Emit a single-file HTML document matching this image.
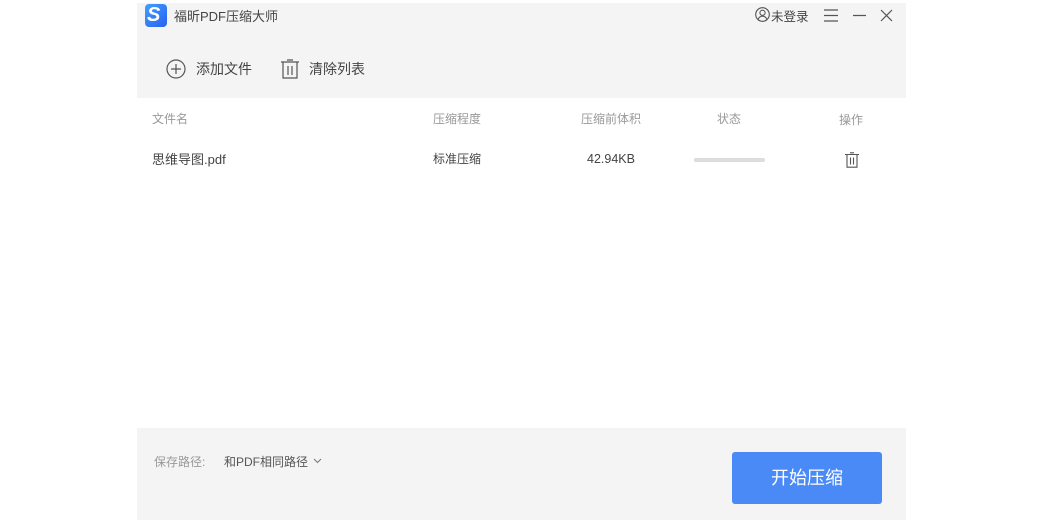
<!DOCTYPE html>
<html><head><meta charset="utf-8"><style>
body{margin:0;width:1042px;height:521px;background:#fff;position:relative;overflow:hidden;font-family:"Liberation Sans","Noto Sans CJK SC",sans-serif;}
.a{position:absolute;}
.t{position:absolute;white-space:nowrap;}
</style></head><body>
<div class="a" style="left:137px;top:3px;width:769px;height:95px;background:#f4f4f4"></div>
<div class="a" style="left:145px;top:4px;width:22px;height:23px;border-radius:4px;background:linear-gradient(135deg,#3fa0ff,#2a5ff0)"></div>
<div class="t" style="left:147px;top:3px;color:#fff;font-weight:bold;font-style:italic;font-size:20px;line-height:24px">S</div>
<div class="t" style="left:174px;top:6px;font-size:13px;color:#444">福昕PDF压缩大师</div>
<svg class="a" style="left:755px;top:7px" width="15" height="15" viewBox="0 0 15 15" fill="none" stroke="#555" stroke-width="1.1"><circle cx="7.5" cy="7.5" r="6.8"/><circle cx="7.5" cy="5.8" r="2.6"/><path d="M3 12.5c1-2.4 2.6-3.3 4.5-3.3s3.5.9 4.5 3.3"/></svg>
<div class="t" style="left:771px;top:6px;font-size:12.5px;color:#444">未登录</div>
<svg class="a" style="left:823px;top:8px" width="70" height="15" viewBox="0 0 70 15" fill="none" stroke="#555" stroke-width="1.2"><path d="M1 2h14M1 7.5h14M1 13h14M30 7.5h13M58 2l11 11M69 2L58 13"/></svg>
<svg class="a" style="left:166px;top:59px" width="20" height="20" viewBox="0 0 20 20" fill="none" stroke="#555" stroke-width="1.2"><circle cx="10" cy="10" r="9"/><path d="M10 5v10M5 10h10"/></svg>
<div class="t" style="left:196px;top:59px;font-size:14px;color:#444">添加文件</div>
<svg class="a" style="left:281px;top:59px" width="18" height="20" viewBox="0 0 18 20" fill="none" stroke="#555" stroke-width="1.2"><path d="M0 3h18M6 1h6M2 3v16h14V3M7 7v9M11 7v9"/></svg>
<div class="t" style="left:309px;top:59px;font-size:14px;color:#444">清除列表</div>
<div class="t" style="left:152px;top:110px;font-size:12px;color:#999">文件名</div>
<div class="t" style="left:433px;top:110px;font-size:12px;color:#999">压缩程度</div>
<div class="t" style="left:581px;top:110px;font-size:12px;color:#999">压缩前体积</div>
<div class="t" style="left:717px;top:110px;font-size:12px;color:#999">状态</div>
<div class="t" style="left:839px;top:111px;font-size:12px;color:#999">操作</div>
<div class="t" style="left:152px;top:149px;font-size:13px;color:#444">思维导图.pdf</div>
<div class="t" style="left:433px;top:150px;font-size:12px;color:#444">标准压缩</div>
<div class="t" style="left:587px;top:152px;font-size:12.5px;color:#444">42.94KB</div>
<div class="a" style="left:694px;top:158px;width:71px;height:4px;border-radius:2px;background:#ddd"></div>
<svg class="a" style="left:845px;top:152px" width="14" height="16" viewBox="0 0 14 16" fill="none" stroke="#555" stroke-width="1.1"><path d="M0 2.5h14M5 .8h4M2 2.5v12.7h10V2.5M5.5 5.5v7M8.5 5.5v7"/></svg>
<div class="a" style="left:137px;top:428px;width:769px;height:92px;background:#f4f4f4"></div>
<div class="t" style="left:154px;top:453px;font-size:12px;color:#999">保存路径:</div>
<div class="t" style="left:224px;top:453px;font-size:12px;color:#555">和PDF相同路径</div>
<svg class="a" style="left:313px;top:458px" width="9" height="6" viewBox="0 0 9 6" fill="none" stroke="#777"><path d="M1 1l3.5 3.5L8 1"/></svg>
<div class="a" style="left:732px;top:452px;width:150px;height:52px;border-radius:3px;background:#4a8af6;color:#fff;font-size:18px;line-height:52px;text-align:center">开始压缩</div>
</body></html>
